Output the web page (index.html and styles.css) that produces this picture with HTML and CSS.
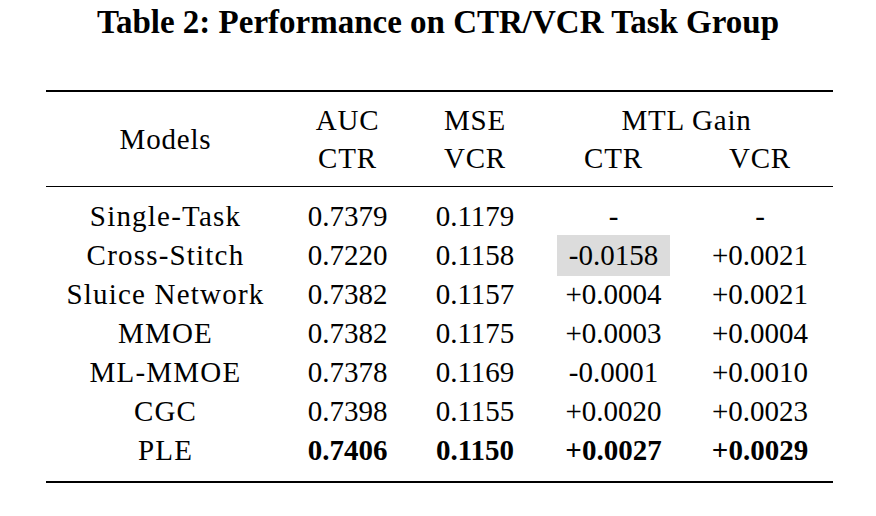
FILE: index.html
```html
<!DOCTYPE html>
<html>
<head>
<meta charset="utf-8">
<link rel="stylesheet" href="styles.css">
</head>
<body>
<h1 class="title">Table 2: Performance on CTR/VCR Task Group</h1>
<div class="tbl">
  <div class="head grid">
    <div class="models">Models</div>
    <div>AUC</div>
    <div>MSE</div>
    <div class="span2">MTL Gain</div>
    <div>CTR</div>
    <div>VCR</div>
    <div>CTR</div>
    <div>VCR</div>
  </div>
  <div class="body grid">
    <div class="name">Single-Task</div><div>0.7379</div><div>0.1179</div><div>-</div><div>-</div>
    <div class="name">Cross-Stitch</div><div>0.7220</div><div>0.1158</div><div><span class="hl">-0.0158</span></div><div>+0.0021</div>
    <div class="name">Sluice Network</div><div>0.7382</div><div>0.1157</div><div>+0.0004</div><div>+0.0021</div>
    <div class="name">MMOE</div><div>0.7382</div><div>0.1175</div><div>+0.0003</div><div>+0.0004</div>
    <div class="name">ML-MMOE</div><div>0.7378</div><div>0.1169</div><div>-0.0001</div><div>+0.0010</div>
    <div class="name">CGC</div><div>0.7398</div><div>0.1155</div><div>+0.0020</div><div>+0.0023</div>
    <div class="name">PLE</div><div class="b">0.7406</div><div class="b">0.1150</div><div class="b">+0.0027</div><div class="b">+0.0029</div>
  </div>
</div>
</body>
</html>
```
FILE: styles.css
```css
html, body {
  margin: 0;
  padding: 0;
  background: #fff;
}
body {
  width: 876px;
  height: 516px;
  overflow: hidden;
  font-family: "Liberation Serif", "Times New Roman", serif;
  color: #000;
}
.title {
  margin: 0;
  padding-top: 2px;
  font-size: 33px;
  line-height: 40px;
  font-weight: bold;
  text-align: center;
}
.tbl {
  width: 787px;
  margin: 48px 0 0 46px;
  border-top: 2px solid #000;
  border-bottom: 2px solid #000;
  font-size: 29px;
}
.grid {
  display: grid;
  grid-template-columns: 239px 125px 130px 147px 146px;
  text-align: center;
}
.head {
  padding: 9px 0;
  line-height: 38px;
  border-bottom: 1px solid #000;
  letter-spacing: 0.8px;
}
.head .models {
  grid-row: 1 / span 2;
  align-self: center;
}
.head .span2 {
  grid-column: 4 / span 2;
}
.body {
  padding: 10px 0 11px;
  line-height: 39px;
}
.name {
  letter-spacing: 1.2px;
}
.b {
  font-weight: bold;
}
.hl {
  display: inline-block;
  background: #dcdcdc;
  padding: 1px 12px;
  margin: -1px 0;
}
```
